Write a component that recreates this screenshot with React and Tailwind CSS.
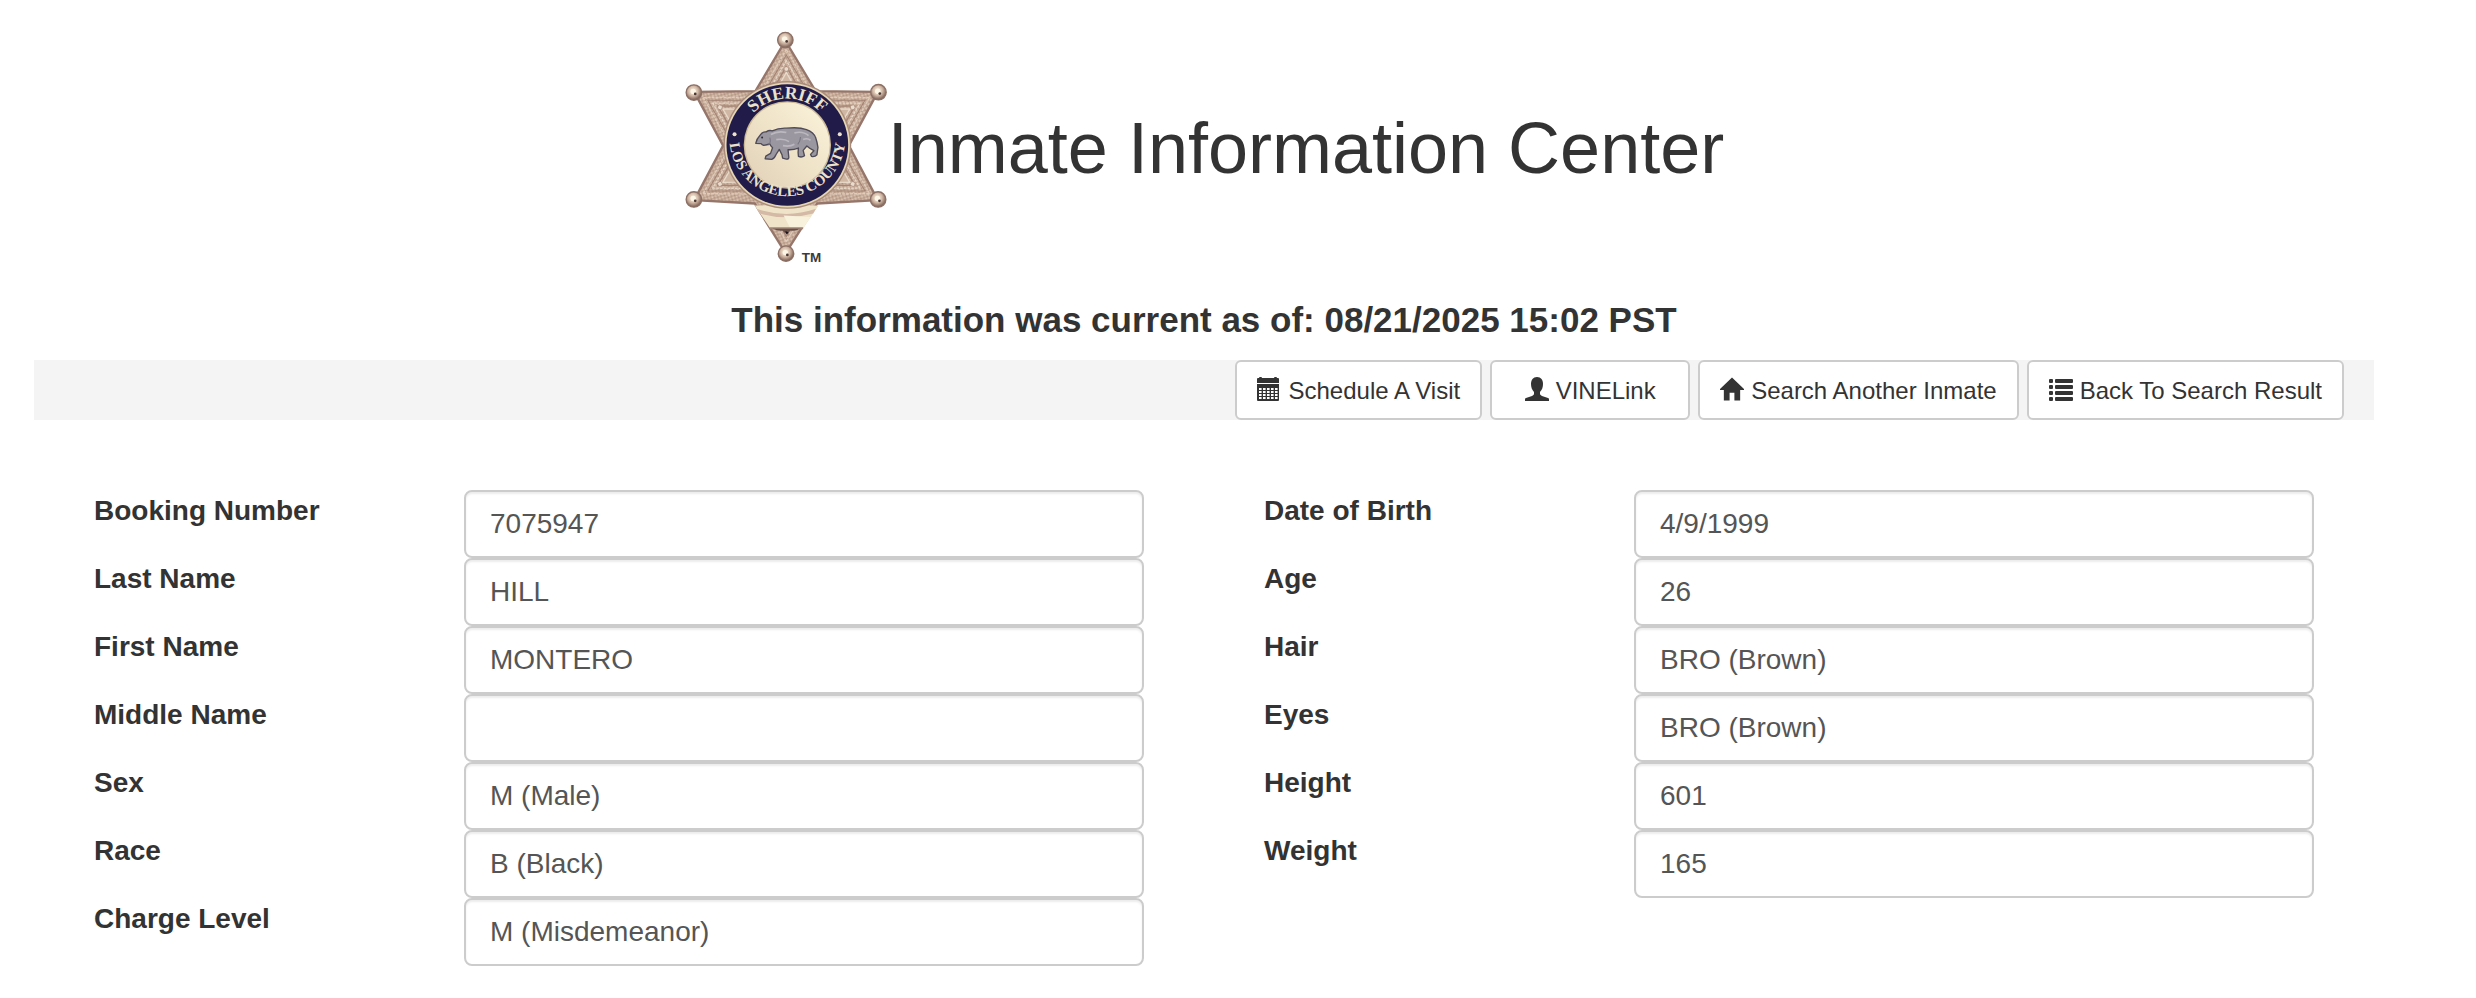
import React from 'react';

const leftFields = [
    { id: 'booking-number', label: 'Booking Number', value: '7075947' },
    { id: 'last-name', label: 'Last Name', value: 'HILL' },
    { id: 'first-name', label: 'First Name', value: 'MONTERO' },
    { id: 'middle-name', label: 'Middle Name', value: '' },
    { id: 'sex', label: 'Sex', value: 'M (Male)' },
    { id: 'race', label: 'Race', value: 'B (Black)' },
    { id: 'charge-level', label: 'Charge Level', value: 'M (Misdemeanor)' },
];

const rightFields = [
    { id: 'date-of-birth', label: 'Date of Birth', value: '4/9/1999' },
    { id: 'age', label: 'Age', value: '26' },
    { id: 'hair', label: 'Hair', value: 'BRO (Brown)' },
    { id: 'eyes', label: 'Eyes', value: 'BRO (Brown)' },
    { id: 'height', label: 'Height', value: '601' },
    { id: 'weight', label: 'Weight', value: '165' },
];

const CalendarIcon = () => (
    <svg viewBox="0 0 24 24" className="mb-1 h-6 w-6" fill="currentColor" aria-hidden="true">
        <path d="M0 2q0-1 1-1h1q0-1 1-1h1q1 0 1 1h12q0-1 1-1h1q1 0 1 1h1q1 0 1 1v4H0z" />
        <path d="M0 7h22v16q0 1-1 1H1q-1 0-1-1z" />
        {[11, 14, 17, 20].map(y => (
            <g key={y} fill="#ffffff">
                {[2, 6, 10, 14, 18].map(x => (
                    <rect key={x} x={x} y={y} width="2.600" height="2" />
                ))}
            </g>
        ))}
    </svg>
);

const UserIcon = () => (
    <svg viewBox="0 0 24 24" className="mb-1 h-6 w-6" fill="currentColor" aria-hidden="true">
        <path d="M12 0c4 0 6 3 6 7 0 3-1 6-3 8v2c0 1 1 1 2 2l6 2c1 0 1 1 1 2v1H0v-1c0-1 0-2 1-2l6-2c1-1 2-1 2-2v-2c-2-2-3-5-3-8 0-4 2-7 6-7z" />
    </svg>
);

const HomeIcon = () => (
    <svg viewBox="0 0 25 24" className="mb-1 h-6 w-6" fill="currentColor" aria-hidden="true">
        <path d="M12.500 0 25 12v1h-4v11h-6v-8h-5v8H4V13H0v-1z" />
    </svg>
);

const ListIcon = () => (
    <svg viewBox="0 0 24 24" className="mb-1 h-6 w-6" fill="currentColor" aria-hidden="true">
        {[2, 8, 14, 20].map(y => (
            <g key={y}>
                <rect x="0" y={y} width="4" height="4" rx="1" />
                <rect x="6" y={y} width="18" height="4" rx="1" />
            </g>
        ))}
    </svg>
);

const actions = [
    { label: 'Schedule A Visit', icon: CalendarIcon },
    { label: 'VINELink', icon: UserIcon },
    { label: 'Search Another Inmate', icon: HomeIcon },
    { label: 'Back To Search Result', icon: ListIcon },
];

// Engraved triangle for each arm of the star, pointing up from the centre
const arms = [0, 60, 120, 180, 240, 300];

const SheriffBadge = () => (
    <svg viewBox="36 30 606 696" className="h-[234px] w-[204px] shrink-0" role="img" aria-label="Sheriff, Los Angeles County">
        <defs>
            <pattern id="engraving" width="14" height="14" patternUnits="userSpaceOnUse" patternTransform="rotate(28)">
                <rect width="14" height="14" fill="#c4a896" />
                <rect x="1" y="1" width="5" height="4" fill="#e2d0be" />
                <rect x="8" y="8" width="5" height="4" fill="#dcc6b2" />
                <rect x="9" y="1" width="3" height="3" fill="#a88776" />
                <rect x="2" y="8" width="3" height="3" fill="#a58473" />
            </pattern>
            <radialGradient id="knob" cx="45%" cy="40%" r="60%">
                <stop offset="0" stopColor="#fff8e6" />
                <stop offset="0.5" stopColor="#d3bba8" />
                <stop offset="1" stopColor="#785b50" />
            </radialGradient>
            <linearGradient id="face" x1="0" y1="1" x2="1" y2="0">
                <stop offset="0" stopColor="#e0d0b8" />
                <stop offset="0.5" stopColor="#efe3c8" />
                <stop offset="1" stopColor="#fbf4dc" />
            </linearGradient>
            <path id="arc-top" d="M205 372a138 138 0 0 1 276 0" />
            <path id="arc-bottom" d="M171 352a172 172 0 1 0 344 0" />
        </defs>

        <path
            d="M337 62 427 212 612 214 526 374 612 536 432 546 338 694 246 546 66 536 152 374 66 214 248 212z"
            fill="url(#engraving)"
            stroke="#96766a"
            strokeWidth="7"
            strokeLinejoin="round"
        />
        {arms.map(angle => (
            <g key={angle} transform={`rotate(${angle} 340 374)`} fill="none" strokeLinejoin="round">
                <path d="M340 88 262 222h156z" stroke="#dfccba" strokeWidth="4" strokeDasharray="9 3" />
                <path d="M340 104 274 218h132z" stroke="#a38374" strokeWidth="3" />
                <path d="M340 121 286 214h108z" stroke="#e6d6c5" strokeWidth="4" strokeDasharray="8 3" />
                <path d="M340 138 300 208h80z" stroke="#a58576" strokeWidth="4" />
                <path d="M340 156 314 202h52z" fill="#cfb7a4" stroke="#e9dac9" strokeWidth="4" />
                <circle cx="340" cy="146" r="7" fill="#eadccc" stroke="#ab8b7c" strokeWidth="2" />
            </g>
        ))}

        {/* Plain panel of the bottom arm */}
        <path d="M246 552h190l-46 68H292z" fill="#efe4c9" />
        <path d="M252 562q88 30 176 0l-8 14q-80 22-160 0z" fill="#d3b9a6" />
        <path d="m332 582 20 38h38l22-34z" fill="#f8f1dc" />
        <path d="M290 620h100" stroke="#a08477" strokeWidth="6" />
        <path d="M300 621q18 8 28 5l12 11 12-11q16 4 28-5z" fill="#675048" />
        <path d="m337 628 10 4-6 6z" fill="#17121a" />

        {[[337, 60], [614, 215], [613, 534], [339, 695], [65, 534], [65, 216]].map(([x, y]) => (
            <g key={`${x}-${y}`}>
                <circle cx={x} cy={y} r="23" fill="url(#knob)" stroke="#8d7065" strokeWidth="4" />
                <circle cx={x - 2} cy={y - 3} r="8" fill="#fdf6e6" />
                <circle cx={x + 4} cy={y + 4} r="4" fill="#4b3834" />
            </g>
        ))}

        <circle cx="343" cy="372" r="190" fill="#a98b7b" />
        <circle cx="343" cy="372" r="186" fill="#e6d6b4" />
        <circle cx="343" cy="372" r="181" fill="#211b49" />
        <circle cx="343" cy="372" r="130" fill="#cdbb98" />
        <circle cx="343" cy="372" r="126" fill="url(#face)" />

        <text fill="#ece2cb" fontFamily="'Liberation Serif', serif" fontWeight="700" fontSize="52" textAnchor="middle">
            <textPath href="#arc-top" startOffset="50%">SHERIFF</textPath>
        </text>
        <text fill="#ece2cb" fontFamily="'Liberation Serif', serif" fontWeight="700" fontSize="44" textAnchor="middle">
            <textPath href="#arc-bottom" startOffset="50%">LOS ANGELES COUNTY</textPath>
        </text>
        <circle cx="186" cy="340" r="6" fill="#ece2cb" />
        <circle cx="499" cy="340" r="6" fill="#ece2cb" />

        {/* Bear */}
        <path
            d="M249 367q3-14 13-24 7-11 18-10 9-6 18-3 18-9 42-8 38-4 60 4 22 8 27 24 5 14 7 29l-3 22q-6 7-16 5l-3-6 10-11q-12-6-21-14l-11 13 4 16q-8 6-18 2l-1-12 1-13q-15 6-31 5l2 19q2 10-7 9l-11-3-2-10-8-16-10 16q-5 12-13 14l-19-2 2-8 14-8 6-17q-6-5-8-11l-12 3q-9 3-14-4z"
            fill="#9b97a0"
            stroke="#4f4b58"
            strokeWidth="4"
            strokeLinejoin="round"
        />
        <path d="M294 341q20-12 46-6M310 356q24-4 38 6M364 336q26-6 42 8M390 356q12-6 22 2M330 374q20 4 34-4" fill="none" stroke="#bcb8c0" strokeWidth="5" />
        <path d="M291 350q4 16-4 22M374 370q8-10 8-22" fill="none" stroke="#77727e" strokeWidth="3" />
        <circle cx="268" cy="350" r="3" fill="#2d2935" />

        <text x="386" y="719" fill="#3b3b3b" fontFamily="'Liberation Sans', sans-serif" fontWeight="700" fontSize="40">TM</text>
    </svg>
);

const FieldColumn = ({ fields }) => (
    <div className="px-[30px]">
        {fields.map(field => (
            <div key={field.id} className="grid grid-cols-[1fr_2fr]">
                <label htmlFor={field.id} className="px-[30px] text-[28px] leading-[42px] font-bold">
                    {field.label}
                </label>
                <div className="px-[30px]">
                    <input
                        id={field.id}
                        type="text"
                        readOnly
                        defaultValue={field.value}
                        className="block h-[68px] w-full rounded-lg border-2 border-[#cccccc] bg-white px-6 text-[28px] text-[#555555] shadow-[inset_0_2px_2px_rgba(0,0,0,0.075)]"
                    />
                </div>
            </div>
        ))}
    </div>
);

const App = () => {
    return (
        <div className="min-h-screen bg-white pt-[30px] pr-[102px] pb-8 pl-[34px] font-['Liberation_Sans',Arial,sans-serif] text-[#333333]">
            <header className="text-center">
                <div className="flex items-center justify-center">
                    <SheriffBadge />
                    <h1 className="pt-0.5 text-[72px] leading-20">Inmate Information Center</h1>
                </div>
                <h2 className="mt-9 mb-5 text-[35px] leading-10 font-bold">
                    This information was current as of: 08/21/2025 15:02 PST
                </h2>
            </header>

            <nav className="flex flex-wrap justify-end gap-2 bg-[#f4f4f4] pr-[30px]">
                {actions.map(({ label, icon: Icon }) => (
                    <button
                        key={label}
                        type="button"
                        className="flex h-[60px] min-w-[200px] items-center justify-center gap-[7px] rounded-md border-2 border-[#cccccc] bg-white px-5 pt-0.5 text-2xl hover:bg-gray-100"
                    >
                        <Icon />
                        {label}
                    </button>
                ))}
            </nav>

            <main className="mt-[70px] grid grid-cols-2">
                <FieldColumn fields={leftFields} />
                <FieldColumn fields={rightFields} />
            </main>
        </div>
    );
};

export default App;
